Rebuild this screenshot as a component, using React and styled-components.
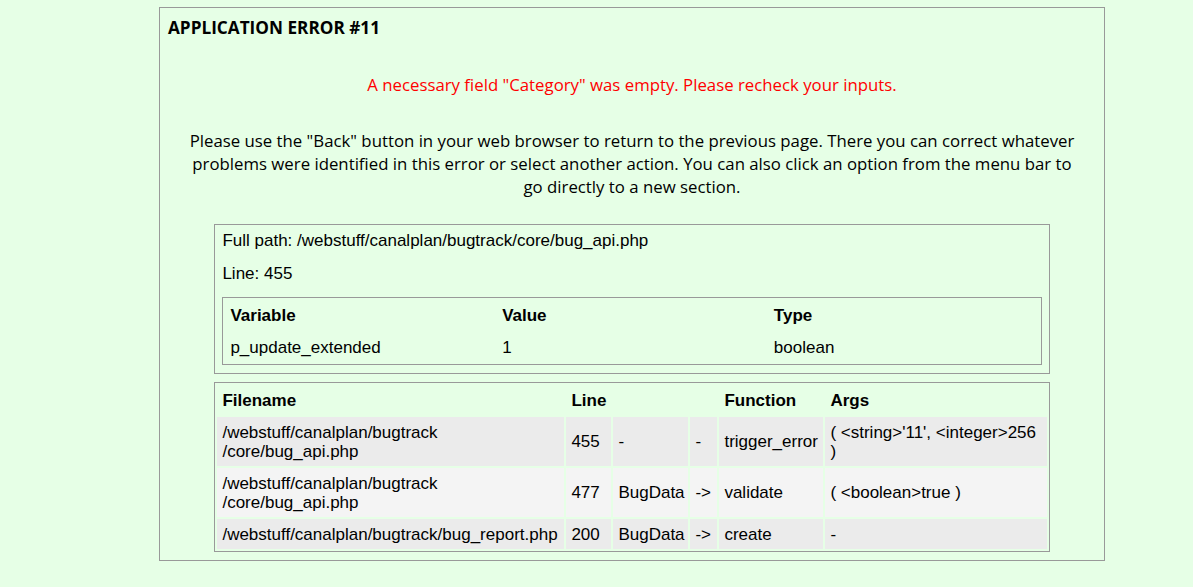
import styled, { createGlobalStyle } from "styled-components";

const GlobalStyle = createGlobalStyle`
  html, body {
    margin: 0;
    padding: 0;
    background: #e6ffe6;
    color: #000;
  }
`;

const Page = styled.div`
  padding: 7px 0 26px 159px;
`;

const ErrorBox = styled.div`
  width: 946px;
  box-sizing: border-box;
  border: 1px solid #999;
  padding: 8px 8px 8px;
  display: flex;
  flex-direction: column;
  align-items: center;
`;

const Title = styled.div`
  align-self: stretch;
  font-family: "Open Sans", sans-serif;
  font-weight: 700;
  font-size: 17.2px;
  line-height: 23px;
`;

const Message = styled.p`
  margin: ${(props) => props.$top}px 0 0;
  font-family: "Open Sans", sans-serif;
  font-size: 16.8px;
  line-height: 23px;
  color: ${(props) => (props.$error ? "#ff0000" : "#000")};
  text-align: center;
  padding: 0 18px;
`;

const InfoBox = styled.div`
  width: 90%;
  margin-top: 26px;
  box-sizing: border-box;
  border: 1px solid #999;
  padding: 6px 7px 8px;
  display: flex;
  flex-direction: column;
  gap: 13.5px;
  font-family: "Liberation Sans", Arial, sans-serif;
  font-size: 17px;
`;

const Line = styled.div`
  line-height: 19.5px;
`;

const Table = styled.table`
  width: ${(props) => (props.$wide ? "90%" : "100%")};
  margin-top: ${(props) => props.$top || 0}px;
  table-layout: fixed;
  border: 1px solid #999;
  border-spacing: 2px;
  font-family: "Liberation Sans", Arial, sans-serif;
  font-size: 17px;
  line-height: 19px;
`;

const Th = styled.th`
  text-align: left;
  font-weight: 700;
  padding: 5.5px 5px;
`;

const Td = styled.td`
  padding: 5.5px 5px;
  vertical-align: middle;
  background: ${(props) => props.$bg || "transparent"};
`;

const variables = [{ name: "p_update_extended", value: "1", type: "boolean" }];

const trace = [
  {
    file: ["/webstuff/canalplan/bugtrack", "/core/bug_api.php"],
    line: "455",
    cls: "-",
    type: "-",
    fn: "trigger_error",
    args: ["( <string>'11', <integer>256", ")"],
  },
  {
    file: ["/webstuff/canalplan/bugtrack", "/core/bug_api.php"],
    line: "477",
    cls: "BugData",
    type: "->",
    fn: "validate",
    args: ["( <boolean>true )"],
  },
  {
    file: ["/webstuff/canalplan/bugtrack/bug_report.php"],
    line: "200",
    cls: "BugData",
    type: "->",
    fn: "create",
    args: ["-"],
  },
];

const withBreaks = (parts) =>
  parts.map((p, i) => (
    <span key={i}>
      {i > 0 && <br />}
      {p}
    </span>
  ));

export default function App() {
  return (
    <>
      <GlobalStyle />
      <Page>
        <ErrorBox>
          <Title>APPLICATION ERROR #11</Title>
          <Message $error $top={34}>
            A necessary field "Category" was empty. Please recheck your inputs.
          </Message>
          <Message $top={33}>
            Please use the "Back" button in your web browser to return to the
            previous page. There you can correct whatever problems were
            identified in this error or select another action. You can also
            click an option from the menu bar to go directly to a new section.
          </Message>

          <InfoBox>
            <Line>Full path: /webstuff/canalplan/bugtrack/core/bug_api.php</Line>
            <Line>Line: 455</Line>
            <Table>
              <thead>
                <tr>
                  <Th>Variable</Th>
                  <Th>Value</Th>
                  <Th>Type</Th>
                </tr>
              </thead>
              <tbody>
                {variables.map((v) => (
                  <tr key={v.name}>
                    <Td>{v.name}</Td>
                    <Td>{v.value}</Td>
                    <Td>{v.type}</Td>
                  </tr>
                ))}
              </tbody>
            </Table>
          </InfoBox>

          <Table $wide $top={8}>
            <colgroup>
              <col style={{ width: 347 }} />
              <col style={{ width: 45 }} />
              <col style={{ width: 75 }} />
              <col style={{ width: 27 }} />
              <col style={{ width: 104 }} />
              <col />
            </colgroup>
            <thead>
              <tr>
                <Th>Filename</Th>
                <Th>Line</Th>
                <Th />
                <Th />
                <Th>Function</Th>
                <Th>Args</Th>
              </tr>
            </thead>
            <tbody>
              {trace.map((t, i) => {
                const bg = i % 2 === 0 ? "#ebebeb" : "#f4f4f4";
                return (
                  <tr key={i}>
                    <Td $bg={bg}>{withBreaks(t.file)}</Td>
                    <Td $bg={bg}>{t.line}</Td>
                    <Td $bg={bg}>{t.cls}</Td>
                    <Td $bg={bg}>{t.type}</Td>
                    <Td $bg={bg}>{t.fn}</Td>
                    <Td $bg={bg}>{withBreaks(t.args)}</Td>
                  </tr>
                );
              })}
            </tbody>
          </Table>
        </ErrorBox>
      </Page>
    </>
  );
}
